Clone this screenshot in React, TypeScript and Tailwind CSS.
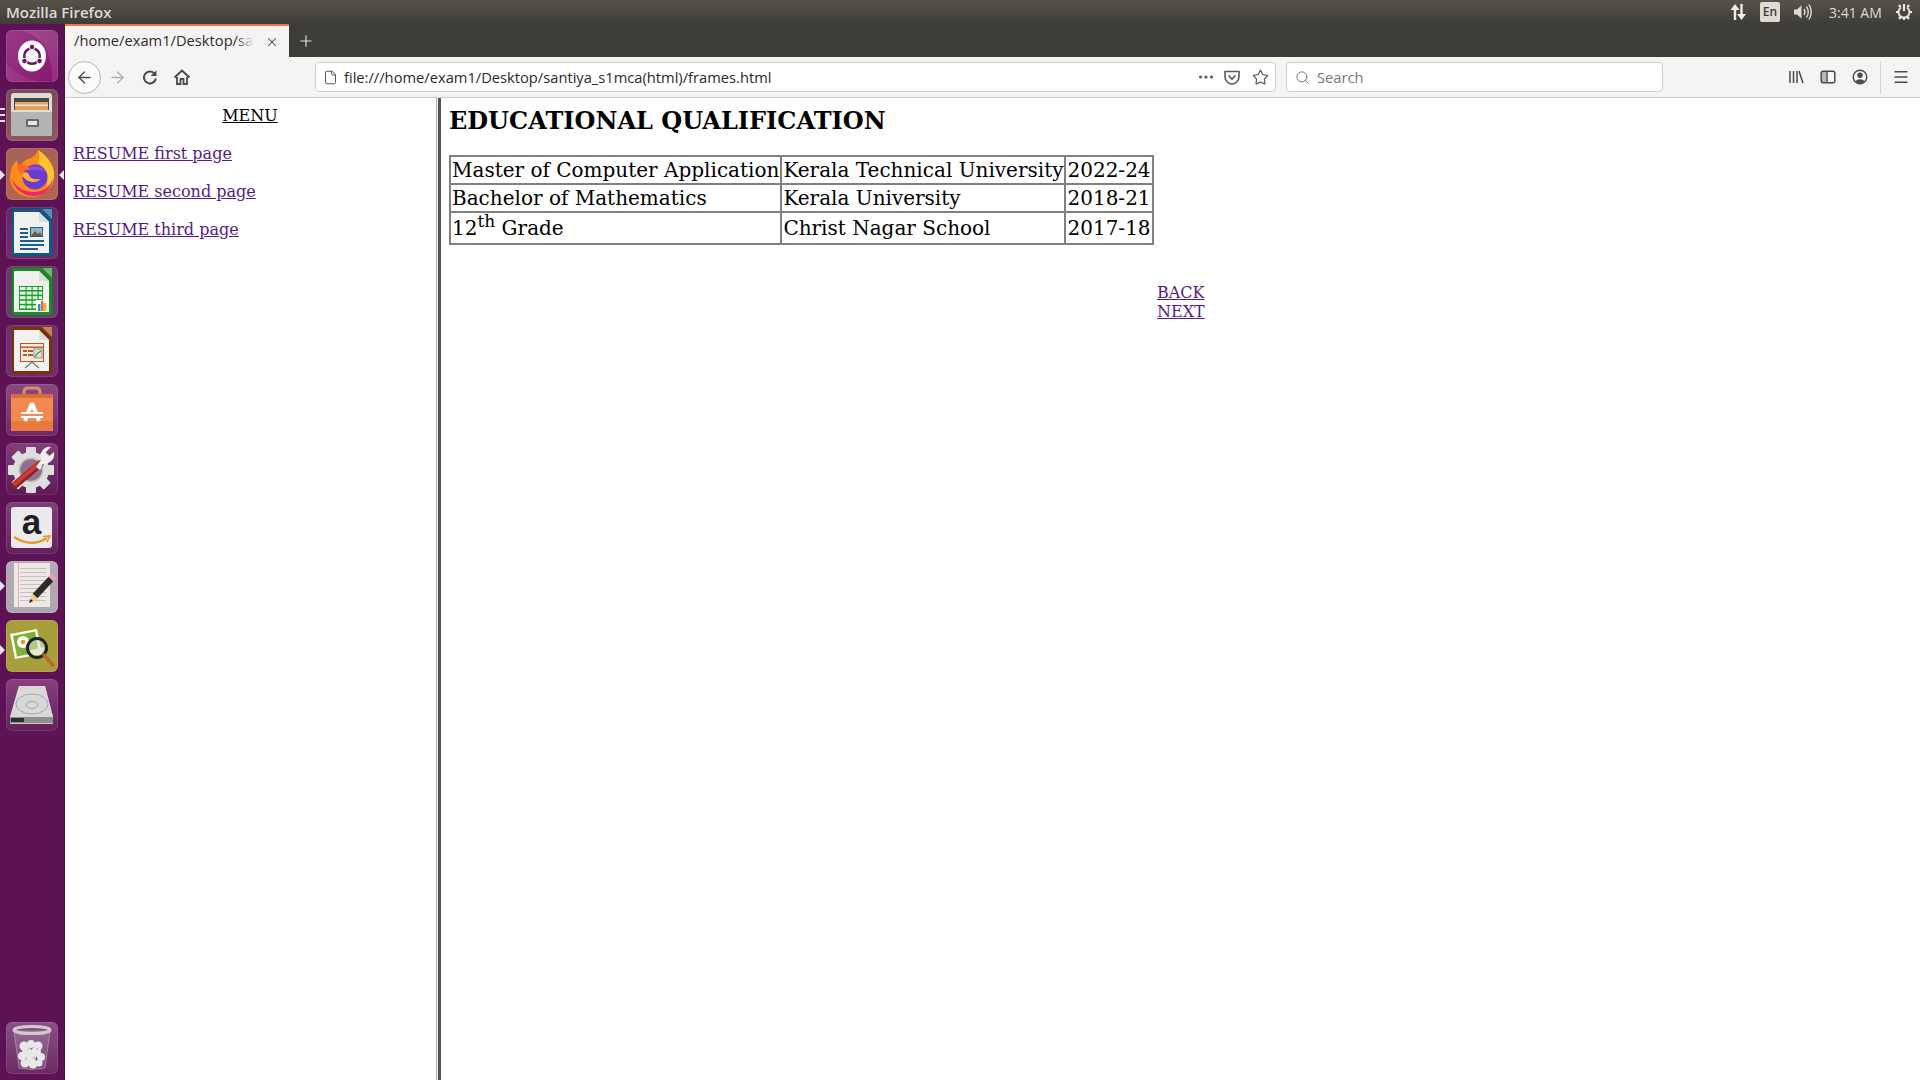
import React from "react";
import { ArrowLeft, ArrowRight, File, Star, Search, X, Plus, Menu } from "lucide-react";

const S = ({ children }: { children: React.ReactNode }) => (
  <svg viewBox="0 0 52 52" width="52" height="52" className="block">{children}</svg>
);

const Tile = ({ cls, children }: { cls: string; children: React.ReactNode }) => (
  <div className={`w-[52px] h-[52px] rounded-[6px] shrink-0 overflow-hidden shadow-[inset_0_0_0_1px_rgba(255,255,255,0.1)] ${cls}`}>{children}</div>
);

const UbuntuIcon = () => (
  <S>
    <path d="M14 0 Q48 8 46 52 L52 52 L52 0Z" fill="#fff" opacity="0.1" />
    <path d="M0 34 Q20 52 40 52 L0 52Z" fill="#fff" opacity="0.07" />
    <ellipse cx="26" cy="26" rx="14" ry="15.5" fill="#fff" />
    <circle cx="26" cy="26" r="7.8" fill="none" stroke="#6a1b5e" strokeWidth="2.6" />
    <circle cx="26" cy="17" r="2.8" fill="#6a1b5e" stroke="#fff" strokeWidth="1" />
    <circle cx="18.5" cy="31" r="2.8" fill="#6a1b5e" stroke="#fff" strokeWidth="1" />
    <circle cx="33.5" cy="31" r="2.8" fill="#6a1b5e" stroke="#fff" strokeWidth="1" />
  </S>
);

const FilesIcon = () => (
  <S>
    <rect x="5" y="4" width="41" height="43" rx="3" fill="#dcdcda" />
    <rect x="8" y="9" width="35" height="16" fill="#4a4845" />
    <rect x="9" y="13" width="33" height="10" fill="#e0a060" />
    <rect x="9" y="15.5" width="33" height="1.5" fill="#f6e6c8" />
    <rect x="5" y="21" width="41" height="26" rx="2" fill="#b4b4b2" />
    <rect x="5" y="21" width="41" height="2" fill="#dcdcda" />
    <rect x="20" y="30" width="13" height="8" rx="1" fill="#6a6a68" />
    <rect x="22" y="32" width="9" height="4" fill="#e6e6e4" />
  </S>
);

const FirefoxIcon = () => (
  <S>
    <path d="M32 2 C44 10 49 20 48 29 C46 42 36 49 26 49 C12 49 3 39 4 27 C5 20 8 15 11 12 C11 15 12 17 14 18 C17 13 21 11 25 10 C28 8 31 6 32 2Z" fill="#ff8a1f" />
    <path d="M32 2 C44 10 49 20 48 29 C47 36 43 41 39 44 C44 34 41 22 32 14 C34 10 34 6 32 2Z" fill="#ffc32e" />
    <path d="M6 30 C8 43 20 49 30 48 C40 47 46 38 47 30 C44 40 36 44 28 44 C18 44 10 40 6 30Z" fill="#ea2a66" />
    <circle cx="29" cy="29" r="12.5" fill="#6a3bcf" />
    <path d="M17 24 C22 17 35 16 41 25 C35 21 24 21 17 24Z" fill="#8f4ecf" />
    <path d="M16 27 C20 35 30 36 35 31 C30 32 24 31 23 27 C22 24 18 23 16 27Z" fill="#ffb02e" />
    <path d="M11 17 C16 15 21 17 24 21 C20 21 17 23 15 27 C13 24 11 21 11 17Z" fill="#ff6a1f" />
  </S>
);

const DocBase = ({ border, corner, children }: { border: string; corner: string; children: React.ReactNode }) => (
  <S>
    <path d="M6 2 H35 L46 13 V47 Q46 49 44 49 H8 Q6 49 6 47Z" fill={border} />
    <path d="M8 5 H33 L43 15 V46 H8Z" fill="#f1f1ef" />
    <path d="M33 5 L43 15 H33Z" fill="#dcdcda" />
    <path d="M36 2 H46 V12Z" fill={corner} />
    {children}
  </S>
);

const WriterIcon = () => (
  <DocBase border="#0f5a85" corner="#4b93b8">
    <rect x="14" y="21" width="8" height="2" fill="#1c5f8c" />
    <rect x="14" y="25" width="8" height="2" fill="#1c5f8c" />
    <rect x="14" y="29" width="8" height="2" fill="#1c5f8c" />
    <rect x="24" y="20" width="13" height="10" fill="#1c5f8c" />
    <rect x="25" y="21" width="11" height="8" fill="#8fb4cc" />
    <path d="M25 29 L29 24 L32 27 L34 25 L36 29Z" fill="#775a30" />
    <rect x="14" y="33" width="24" height="2" fill="#1c5f8c" />
    <rect x="14" y="37" width="24" height="2" fill="#1c5f8c" />
    <rect x="14" y="41" width="18" height="2" fill="#1c5f8c" />
  </DocBase>
);

const CalcIcon = () => (
  <DocBase border="#1a8a22" corner="#5fbf5f">
    <rect x="13" y="20" width="24" height="24" fill="#18a02a" />
    {[0, 1, 2, 3, 4].map((r) => (
      <rect key={r} x="14" y={21 + r * 4.6} width="22" height="3" fill="#e9f6e6" />
    ))}
    {[0, 1, 2].map((c) => (
      <rect key={c} x={19.5 + c * 6} y="20" width="1.2" height="24" fill="#18a02a" />
    ))}
    <rect x="30" y="34" width="13" height="11" fill="#fff" />
    <rect x="32" y="38" width="2.5" height="7" fill="#2f8fd0" />
    <rect x="35" y="35" width="2.5" height="10" fill="#e06a3a" />
    <rect x="38" y="37" width="2.5" height="8" fill="#f0b030" />
  </DocBase>
);

const ImpressIcon = () => (
  <DocBase border="#7a3208" corner="#c5824e">
    <rect x="14" y="18" width="24" height="19" fill="#c2531c" />
    <rect x="15" y="19" width="22" height="17" fill="#f0ece6" />
    <rect x="15" y="21.5" width="22" height="1.4" fill="#c2531c" />
    <rect x="17" y="25" width="4" height="2" fill="#c2531c" />
    <rect x="22" y="25" width="5" height="2" fill="#c2531c" />
    <rect x="17" y="29" width="4" height="2" fill="#c2531c" />
    <rect x="22" y="29" width="5" height="2" fill="#c2531c" />
    <rect x="28" y="24" width="8" height="9" fill="#d9e6d5" stroke="#555" strokeWidth="0.6" />
    <path d="M29 32 L32 28 L35 26" stroke="#2f9a3a" fill="none" strokeWidth="1.2" />
    <path d="M26 37 L19 43 M26 37 L33 43" stroke="#777" strokeWidth="1.4" />
  </DocBase>
);

const SoftwareIcon = () => (
  <S>
    <path d="M18 14 V8 Q18 4 22 4 H30 Q34 4 34 8 V14" fill="none" stroke="#d98a68" strokeWidth="3" />
    <path d="M5 10 H47 V47 H5Z" fill="#f08a4e" />
    <path d="M5 10 H47 L46 14 H6Z" fill="#d8693a" />
    <path d="M5 37 H47 V47 H5Z" fill="#e97a3e" />
    <path d="M26 19 L19 37 M26 19 L33 37" stroke="#fff" strokeWidth="4" fill="none" />
    <rect x="15" y="28" width="22" height="2" fill="#fff" />
    <rect x="15" y="32" width="22" height="2" fill="#fff" />
    <rect x="15" y="30" width="22" height="2" fill="#f08a4e" />
  </S>
);

const ToolsIcon = () => (
  <S>
    <g fill="#dededc">
      <circle cx="25" cy="27" r="18" />
      {[0, 45, 90, 135, 180, 225, 270, 315].map((a) => (
        <rect key={a} x="20" y="4" width="10" height="8" rx="1" transform={`rotate(${a} 25 27)`} />
      ))}
    </g>
    <circle cx="25" cy="27" r="11.5" fill="#90708c" />
    <circle cx="25" cy="27" r="11.5" fill="none" stroke="#b9b9b7" strokeWidth="1.5" />
    <path d="M9 42 L34 21" stroke="#8c1f1b" strokeWidth="7" strokeLinecap="round" />
    <path d="M9 41 L33 20.5" stroke="#d23a32" strokeWidth="4" strokeLinecap="round" />
    <path d="M30 24 L35 17 Q33 9 39 5 Q42 3 45 4 L39 10 L42 14 L48 9 Q49 16 44 19 Q40 22 37 21 L34 27Z" fill="#efefed" />
  </S>
);

const AmazonIcon = () => (
  <S>
    <rect x="5" y="5" width="41" height="41" rx="3" fill="#ebebeb" />
    <text x="25.5" y="32" textAnchor="middle" fontSize="35" fontWeight="700" fontFamily="'Liberation Sans', sans-serif" fill="#1f1f1f">a</text>
    <path d="M8 35 Q25 46 41 36" fill="none" stroke="#f0961c" strokeWidth="2.2" />
    <path d="M37 34.5 L44 34 L41 40" fill="none" stroke="#f0961c" strokeWidth="1.6" />
  </S>
);

const GeditIcon = () => (
  <S>
    <rect x="8" y="2" width="36" height="44" fill="#efe9e6" />
    <rect x="12" y="2" width="0.8" height="44" fill="#e2a0a0" />
    {[7, 11, 15, 19, 23, 27, 31, 35, 39].map((y) => (
      <rect key={y} x="14" y={y} width="26" height="1" fill="#c4c0c8" />
    ))}
    <path d="M29 35 L45 18" stroke="#2d2b2a" strokeWidth="6.5" />
    <path d="M23 42 L26 32.5 L32.5 38Z" fill="#f0d080" />
    <path d="M23 42 L24.5 38 L27 40Z" fill="#222" />
    <path d="M42.5 15.5 L45.5 12 L50.5 17 L47.5 20.5Z" fill="#e7a0b8" />
  </S>
);

const EogIcon = () => (
  <S>
    <path d="M4 14 L31 9 L36 34 L9 39Z" fill="#fafaf2" />
    <path d="M7 16 L29 11.5 L33 32 L11 36.5Z" fill="#7fae3a" />
    <circle cx="17" cy="22" r="6" fill="#fff" />
    <circle cx="17" cy="22" r="2.3" fill="#e79a24" />
    <path d="M21 31 L38 27 V31 L24 35Z" fill="#eef0df" />
    <circle cx="31" cy="28" r="9.5" fill="#dde6c6" fillOpacity="0.55" stroke="#1f2226" strokeWidth="3" />
    <path d="M38 35 L47 45" stroke="#b8682a" strokeWidth="3.5" strokeLinecap="round" />
  </S>
);

const DiskIcon = () => (
  <S>
    <path d="M13 7 H39 L47 38 V45 H4 V38Z" fill="#c7c7c5" />
    <path d="M13 7 H39 L47 38 H4Z" fill="#d8d8d6" />
    <ellipse cx="26" cy="25" rx="16" ry="10" fill="none" stroke="#a9a9a7" strokeWidth="1" />
    <ellipse cx="26" cy="26" rx="6" ry="3.5" fill="none" stroke="#a5a5a3" strokeWidth="1" />
    <rect x="4" y="38" width="43" height="6" fill="#8e8e8c" />
    <rect x="5" y="39" width="13" height="4" fill="#2e2e2e" />
  </S>
);

const TrashIcon = () => (
  <S>
    <path d="M8 9 L13 46 Q26 49 39 46 L44 9Z" fill="#fff" fillOpacity="0.14" stroke="#ffffff" strokeOpacity="0.3" />
    <g fill="#e8e8e8">
      {[
        [18, 24, 4.5], [25, 22, 4], [32, 24, 4.5], [21, 30, 5], [30, 30, 5], [16, 34, 4],
        [25, 35, 5], [35, 35, 4], [19, 41, 4.5], [27, 42, 4.5], [33, 41, 3.5],
      ].map(([x, y, r], i) => (
        <circle key={i} cx={x} cy={y} r={r} />
      ))}
    </g>
    <g fill="#c9c9c9">
      <circle cx="23" cy="27" r="1.4" />
      <circle cx="28" cy="36" r="1.6" />
      <circle cx="20" cy="37" r="1.3" />
      <circle cx="31" cy="27" r="1.2" />
    </g>
    <ellipse cx="26" cy="8" rx="18" ry="3.6" fill="none" stroke="#cdcdcb" strokeWidth="3" />
  </S>
);

const td = "border-2 border-[#808080] px-[1px] py-0 whitespace-nowrap align-middle";

export default function App() {
  const ui = { fontFamily: "'Open Sans', 'Noto Sans', sans-serif" };
  return (
    <div className="w-[1920px] h-[1080px] flex flex-col overflow-hidden bg-white font-['DejaVu_Serif',serif]">
      {/* system top bar */}
      <div className="h-6 shrink-0 flex items-center bg-linear-to-b from-[#56534a] to-[#3e3d38] text-[#dfdbd2] font-['Open_Sans',sans-serif]">
        <span className="ml-[6px] text-[15px] font-semibold">Mozilla Firefox</span>
        <div className="ml-auto flex items-center h-6">
          <svg viewBox="0 0 18 18" width="18" height="18" className="mr-[13px]">
            <path d="M6 17 V6" stroke="#f0eee8" strokeWidth="2.4" />
            <path d="M1.5 7 L6 1 L10.5 7Z" fill="#f0eee8" />
            <path d="M12.5 1 V12" stroke="#f0eee8" strokeWidth="2.4" />
            <path d="M8 11 L12.5 17 L17 11Z" fill="#f0eee8" />
          </svg>
          <div className="w-[20px] h-[20px] rounded-[2px] bg-[#dfdbd2] text-[#3c3b37] text-[12px] font-semibold flex items-center justify-center mr-[13px]">En</div>
          <svg viewBox="0 0 20 18" width="20" height="18" className="mr-[16px]">
            <path d="M1 6.5 H4 L8.5 2.5 V15.5 L4 11.5 H1Z" fill="#dfdbd2" />
            <path d="M11 6 Q13 9 11 12" fill="none" stroke="#dfdbd2" strokeWidth="1.4" />
            <path d="M13.5 3.5 Q17 9 13.5 14.5" fill="none" stroke="#dfdbd2" strokeWidth="1.4" />
            <path d="M16 1.5 Q20.5 9 16 16.5" fill="none" stroke="#dfdbd2" strokeWidth="1.4" />
          </svg>
          <span className="text-[14px] text-[#dfdbd2] w-[52px] whitespace-nowrap mr-[14px]">3:41 AM</span>
          <svg viewBox="0 0 18 18" width="18" height="18" className="mr-[7px]">
            <g stroke="#e8e6e0" strokeWidth="2.2">
              <path d="M4 2 L5.5 4 M14 2 L12.5 4 M1 9 H3 M15 9 H17 M4 16 L5.5 14 M14 16 L12.5 14 M9 15 V17" />
            </g>
            <path d="M6 4.5 A5.5 5.5 0 1 0 12 4.5" fill="none" stroke="#e8e6e0" strokeWidth="2" />
            <path d="M9 1 V8" stroke="#e8e6e0" strokeWidth="2.2" />
          </svg>
        </div>
      </div>

      <div className="flex-1 flex min-h-0">
        {/* launcher */}
        <div className="relative w-[65px] shrink-0 bg-[#5e1256] flex flex-col items-center pt-[6px] pb-[6px] gap-[7px] border-r border-[#4b0e45] pr-[1px]">
          <Tile cls="bg-linear-to-br from-[#9b3a88] to-[#85146f]"><UbuntuIcon /></Tile>
          <Tile cls="bg-linear-to-b from-[#7f4a58] to-[#8d5860]"><FilesIcon /></Tile>
          <Tile cls="bg-linear-to-b from-[#a76256] to-[#b0664f]"><FirefoxIcon /></Tile>
          <Tile cls="bg-linear-to-b from-[#5f2a68] to-[#6c2f6e]"><WriterIcon /></Tile>
          <Tile cls="bg-linear-to-b from-[#5c3f5f] to-[#66406a]"><CalcIcon /></Tile>
          <Tile cls="bg-linear-to-b from-[#70306a] to-[#6f2f66]"><ImpressIcon /></Tile>
          <Tile cls="bg-linear-to-b from-[#8a4a80] to-[#6e2a68]"><SoftwareIcon /></Tile>
          <Tile cls="bg-linear-to-b from-[#7f3f78] to-[#5f1a5a]"><ToolsIcon /></Tile>
          <Tile cls="bg-linear-to-b from-[#7f3f78] to-[#65205f]"><AmazonIcon /></Tile>
          <Tile cls="bg-linear-to-b from-[#b3a9b3] to-[#b0a6b0]"><GeditIcon /></Tile>
          <Tile cls="bg-[#a79f3c]"><EogIcon /></Tile>
          <Tile cls="bg-linear-to-b from-[#8a3f82] to-[#63205c]"><DiskIcon /></Tile>
          <div className="mt-auto">
            <Tile cls="bg-linear-to-b from-[#8a5084] to-[#6a2a64]"><TrashIcon /></Tile>
          </div>
          <div className="absolute left-0 top-[84px] w-[5px] h-[14px] flex flex-col justify-between">
            <span className="block w-[5px] h-[2px] bg-[#e8e4e8]" />
            <span className="block w-[5px] h-[2px] bg-[#e8e4e8]" />
            <span className="block w-[5px] h-[2px] bg-[#e8e4e8]" />
          </div>
          <span className="absolute left-0 top-[146px] border-y-[5px] border-y-transparent border-l-[5px] border-l-[#e8e4e8]" />
          <span className="absolute right-0 top-[146px] border-y-[5px] border-y-transparent border-r-[5px] border-r-[#e8e4e8]" />
          <span className="absolute left-0 top-[557px] border-y-[5px] border-y-transparent border-l-[5px] border-l-[#e8e4e8]" />
          <span className="absolute left-0 top-[621px] border-y-[5px] border-y-transparent border-l-[5px] border-l-[#e8e4e8]" />
        </div>

        {/* browser */}
        <div className="flex-1 min-w-0 flex flex-col">
          {/* tab strip */}
          <div className="h-[33px] shrink-0 bg-[#3d3c37] flex items-stretch" style={ui}>
            <div className="w-[224px] bg-[#f5f4f2] border-t-[2px] border-[#e9784a] flex items-center pl-[9px] pr-[10px] relative">
              <span className="text-[14.7px] text-[#2e2e2e] whitespace-nowrap -mt-[2px]">/home/exam1/Desktop/san</span>
              <span className="absolute left-[170px] top-0 bottom-0 w-[28px] bg-linear-to-r from-transparent via-[#f5f4f2] via-70% to-[#f5f4f2]" />
              <X size={14} strokeWidth={1.8} color="#444" className="ml-auto relative" />
            </div>
            <div className="flex items-center pl-[8px]">
              <Plus size={18} strokeWidth={1.6} color="#e0dfdc" />
            </div>
          </div>
          {/* nav bar */}
          <div className="h-[41px] shrink-0 bg-[#f5f4f2] border-b border-[#c8c8c6] flex items-center pl-[3px]" style={ui}>
            <div className="w-[33px] h-[33px] rounded-full border border-[#b5b5b3] bg-[#fbfbfa] flex items-center justify-center">
              <ArrowLeft size={19} strokeWidth={1.7} color="#4a4a4a" />
            </div>
            <ArrowRight size={19} strokeWidth={1.7} color="#b0b0ae" className="ml-[7px]" />
            <svg viewBox="0 0 16 16" width="16" height="16" className="ml-[15px]">
              <path d="M12.6 4.6 A6 6 0 1 0 13.9 9.5" fill="none" stroke="#4a4a4a" strokeWidth="2" />
              <path d="M14.5 1.2 V7 H8.7Z" fill="#4a4a4a" />
            </svg>
            <svg viewBox="0 0 18 18" width="18" height="18" className="ml-[15px]">
              <path d="M1.5 9.5 L9 2.5 L16.5 9.5" fill="none" stroke="#4a4a4a" strokeWidth="2" />
              <path d="M4 9 V16 H7.5 V11 H10.5 V16 H14 V9" fill="none" stroke="#4a4a4a" strokeWidth="1.8" />
            </svg>
            <div className="ml-[124px] w-[961px] h-[30px] bg-white border border-[#cfcfcd] rounded-[4px] flex items-center pl-[7px] pr-[6px]">
              <File size={15} strokeWidth={1.6} color="#555" />
              <span className="ml-[6px] text-[14.7px] text-[#2a2a2a] whitespace-nowrap">file:///home/exam1/Desktop/santiya_s1mca(html)/frames.html</span>
              <div className="ml-auto flex items-center">
                <svg viewBox="0 0 16 4" width="16" height="4" className="mr-[9px]">
                  <circle cx="2.5" cy="2" r="1.6" fill="#5a5a5a" />
                  <circle cx="8" cy="2" r="1.6" fill="#5a5a5a" />
                  <circle cx="13.5" cy="2" r="1.6" fill="#5a5a5a" />
                </svg>
                <svg viewBox="0 0 18 18" width="18" height="18" className="mr-[11px]">
                  <path d="M2 3.5 H16 V9 C16 13 12 16 9 16 C6 16 2 13 2 9Z" fill="none" stroke="#5a5a5a" strokeWidth="1.6" />
                  <path d="M5.5 7.5 L9 11 L12.5 7.5" fill="none" stroke="#5a5a5a" strokeWidth="1.7" />
                </svg>
                <Star size={17} strokeWidth={1.7} color="#5a5a5a" />
              </div>
            </div>
            <div className="ml-[10px] w-[377px] h-[30px] bg-white border border-[#cfcfcd] rounded-[4px] flex items-center pl-[8px]">
              <Search size={15} strokeWidth={1.6} color="#777" />
              <span className="ml-[7px] text-[14.7px] text-[#777]">Search</span>
            </div>
            <div className="ml-auto flex items-center">
              <svg viewBox="0 0 16 16" width="16" height="16" className="mr-[16px]">
                <path d="M2 2 V14 M5.5 2 V14 M9 2 V14 M11 2 L15 14" stroke="#4a4a4a" strokeWidth="1.5" fill="none" />
              </svg>
              <svg viewBox="0 0 16 16" width="16" height="16" className="mr-[16px]">
                <rect x="1.2" y="2.2" width="13.6" height="11.6" rx="2" fill="none" stroke="#4a4a4a" strokeWidth="1.5" />
                <rect x="2" y="3" width="4.5" height="10" fill="#4a4a4a" opacity="0.35" />
                <path d="M7 2.5 V13.5" stroke="#4a4a4a" strokeWidth="1.4" />
              </svg>
              <svg viewBox="0 0 16 16" width="16" height="16" className="mr-[12px]">
                <circle cx="8" cy="8" r="6.8" fill="none" stroke="#4a4a4a" strokeWidth="1.4" />
                <circle cx="8" cy="6.3" r="2.7" fill="#4a4a4a" />
                <path d="M3.5 12.5 C5 9.5 11 9.5 12.5 12.5 C10 14.8 6 14.8 3.5 12.5Z" fill="#4a4a4a" />
              </svg>
              <div className="w-px h-[33px] bg-[#d4d4d2] mr-[11px]" />
              <Menu size={18} strokeWidth={1.7} color="#4a4a4a" className="mr-[10px]" />
            </div>
          </div>

          {/* frames */}
          <div className="flex-1 min-h-0 flex bg-white text-black">
            <div className="w-[371px] shrink-0 pt-[8px] pl-[8px] pr-[9px] text-[16px] leading-[19px]">
              <p className="text-center underline m-0">MENU</p>
              <p className="mt-[19px] underline text-[#551a8b]">RESUME first page</p>
              <p className="mt-[19px] underline text-[#551a8b]">RESUME second page</p>
              <p className="mt-[19px] underline text-[#551a8b]">RESUME third page</p>
            </div>
            <div className="w-[5px] shrink-0 border-l border-[#b8b8b8] border-r-[3px] border-r-[#555555] bg-[#ececec]" />
            <div className="flex-1 pl-[8px] text-[16px]">
              <h2 className="text-[24px] leading-[28px] font-bold mt-[9px]">EDUCATIONAL QUALIFICATION</h2>
              <table className="mt-[20px] border-collapse text-[20px] leading-[24px]">
                <tbody>
                  <tr className="h-[28px]">
                    <td className={td}>Master of Computer Application</td>
                    <td className={td}>Kerala Technical University</td>
                    <td className={td}>2022-24</td>
                  </tr>
                  <tr className="h-[28px]">
                    <td className={td}>Bachelor of Mathematics</td>
                    <td className={td}>Kerala University</td>
                    <td className={td}>2018-21</td>
                  </tr>
                  <tr className="h-[32px]">
                    <td className={td}>12<sup className="text-[17px] leading-none">th</sup> Grade</td>
                    <td className={td}>Christ Nagar School</td>
                    <td className={td}>2017-18</td>
                  </tr>
                </tbody>
              </table>
              <div className="mt-[38px] ml-[708px] w-fit text-[16px] leading-[19px] text-[#551a8b] underline">
                <p>BACK</p>
                <p>NEXT</p>
              </div>
            </div>
          </div>
        </div>
      </div>
    </div>
  );
}
